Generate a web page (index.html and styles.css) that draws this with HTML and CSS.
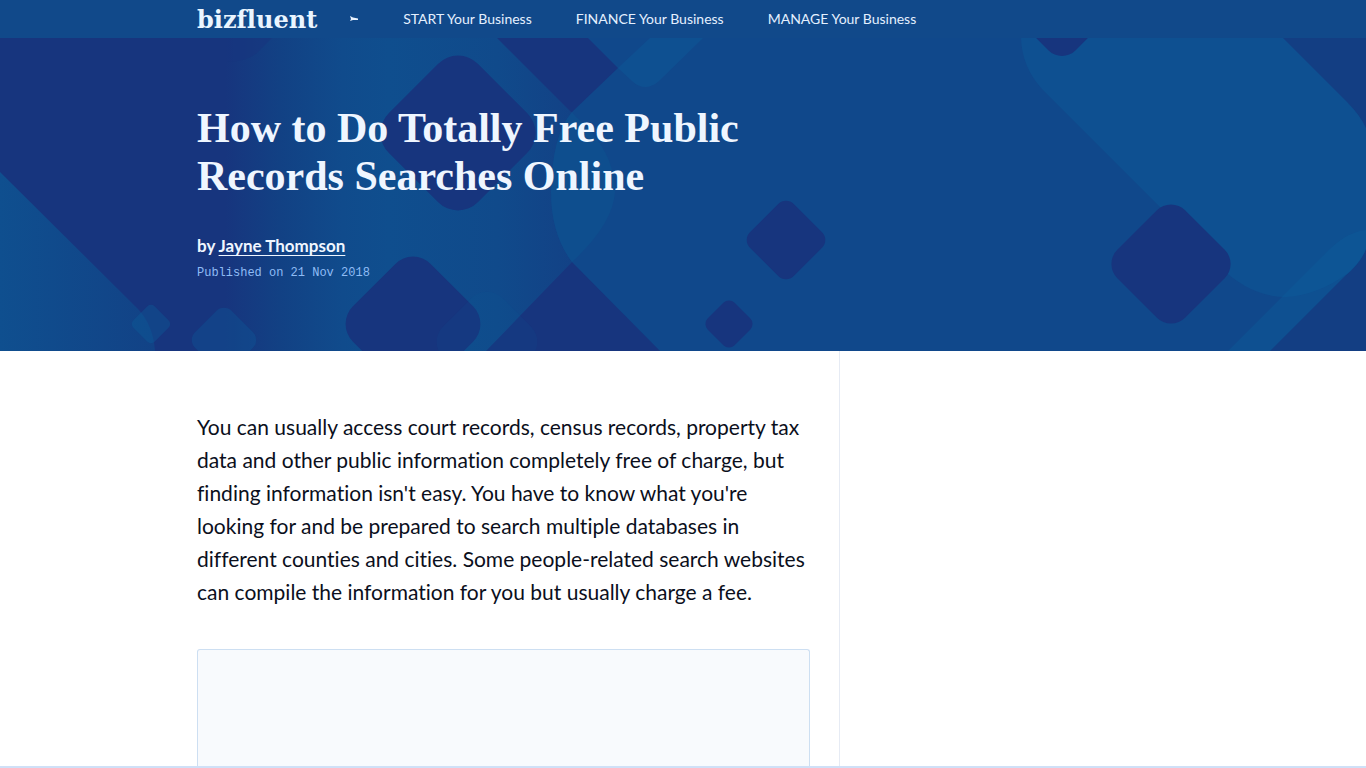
FILE: index.html
```html
<!DOCTYPE html>
<html lang="en">
<head>
    <meta charset="utf-8">
    <meta name="viewport" content="width=device-width, initial-scale=1.0">
    <title>How to Do Totally Free Public Records Searches Online</title>
    <link rel="stylesheet" href="styles.css">
</head>
<body>
    <header class="site-header">
        <div class="wrap header-row">
            <a class="logo" href="#">bizfluent</a>
            <svg class="arrow" viewBox="0 0 10 6" aria-hidden="true">
                <path d="M1 0 L4 1.500 L9 2.500 L9 4 L4 4 L1 5 L2 3 Z" fill="#eaf3ff"/>
            </svg>
            <nav class="nav">
                <a href="#">START Your Business</a>
                <a href="#">FINANCE Your Business</a>
                <a href="#">MANAGE Your Business</a>
            </nav>
        </div>
    </header>

    <section class="hero">
        <svg class="hero-bg" viewBox="0 0 1366 313" preserveAspectRatio="xMidYMid slice" aria-hidden="true">
            <defs>
                <linearGradient id="fade-left" gradientUnits="userSpaceOnUse" x1="0" y1="0" x2="155" y2="0">
                    <stop offset="0" stop-color="#0f4f8f"/>
                    <stop offset="1" stop-color="#124286"/>
                </linearGradient>
                <linearGradient id="fade-mid" gradientUnits="userSpaceOnUse" x1="225" y1="0" x2="615" y2="0">
                    <stop offset="0" stop-color="#17357e"/>
                    <stop offset=".14" stop-color="#124184"/>
                    <stop offset=".3" stop-color="#104b8c"/>
                    <stop offset=".42" stop-color="#0f4e8e"/>
                    <stop offset=".7" stop-color="#104a8b"/>
                    <stop offset="1" stop-color="#143d83"/>
                </linearGradient>
            </defs>
            <rect width="1366" height="313" fill="#17357e"/>
            <path d="M0 134 L138 271 Q153 287 155 313 H0 Z" fill="url(#fade-left)"/>
            <path d="M225 0 H497 L575 78 Q615 112 615 154 Q613 186 572 224 L486 313 H225 Z" fill="url(#fade-mid)"/>
            <path d="M225 0 H272 L257 15 Q247 24 225 24 Z" fill="#17357e" opacity=".6"/>
            <!-- large blue panel -->
            <path d="M588 0 H1366 V313 H660 L572 224 Q551 196 551 154 Q552 97 572 74 L618 30 Z" fill="#10488b"/>
            <path d="M572 74 L575 78 Q615 112 615 154 Q613 186 572 224 Q551 196 551 154 Q552 97 572 74 Z" fill="#0e4e8e"/>
            <path d="M1283 0 H1366 V90 Q1360 77 1347 64 Z" fill="#133e83"/>
            <path d="M1366 211 Q1361 225 1345 238 L1270 313 H1366 Z" fill="#133e83"/>
            <g fill="#0a65a0" opacity=".28">
                <path d="M650 0 L618 30 L632 43 Q645 55 659 43 L703 0 Z"/>
            </g>
            <path d="M1021 0 Q1022 29 1042 51 L1218 227 Q1250 259 1286 259 Q1318 257 1348 235 Q1361 223 1366 211 V90 Q1360 77 1347 64 L1283 0 Z" fill="#0a65a0" opacity=".28"/>
            <path d="M1228 313 L1323 218 Q1345 194 1366 192 V211 Q1361 225 1345 238 L1270 313 Z" fill="#0a65a0" opacity=".28"/>
            <!-- diamonds -->
            <g fill="#17357e">
                <rect x="395" y="32" width="126" height="126" rx="28" transform="rotate(45 458 95)"/>
                <rect x="358" y="231" width="110" height="110" rx="25" transform="rotate(45 413 286)"/>
                <rect x="755" y="171" width="62" height="62" rx="11" transform="rotate(45 786 202)"/>
                <rect x="710" y="267" width="38" height="38" rx="8" transform="rotate(45 729 286)"/>
                <rect x="1123" y="178" width="96" height="96" rx="20" transform="rotate(45 1171 226)"/>
                <rect x="1014" y="-90" width="96" height="96" rx="19" transform="rotate(45 1062 -42)"/>
            </g>
            <g fill="#0a65a0">
                <rect x="136" y="271" width="30" height="30" rx="5" transform="rotate(45 151 286)" opacity=".32"/>
                <rect x="198" y="276" width="52" height="52" rx="11" transform="rotate(45 224 302)" opacity=".28"/>
                <rect x="445" y="262" width="84" height="84" rx="22" transform="rotate(45 487 304)" opacity=".1"/>
            </g>
        </svg>
        <div class="wrap hero-text">
            <h1>How to Do Totally Free Public Records Searches Online</h1>
            <p class="author">by <a href="#">Jayne Thompson</a></p>
            <p class="date">Published on 21 Nov 2018</p>
        </div>
    </section>

    <main class="wrap content">
        <article class="article">
            <p>You can usually access court records, census records, property tax<br>
            data and other public information completely free of charge, but<br>
            finding information isn't easy. You have to know what you're<br>
            looking for and be prepared to search multiple databases in<br>
            different counties and cities. Some people-related search websites<br>
            can compile the information for you but usually charge a fee.</p>
            <div class="ad-box"></div>
        </article>
        <aside class="sidebar"></aside>
    </main>
    <div class="bottom-bar"></div>
</body>
</html>
```
FILE: styles.css
```css
* {
    box-sizing: border-box;
}
body {
    margin: 0;
    height: 100vh;
    overflow: hidden;
    display: flex;
    flex-direction: column;
    font-family: Lato, "Open Sans", sans-serif;
    font-variant-ligatures: none;
    color: #0b0f1c;
    background: #fff;
}
.wrap {
    width: 100%;
    max-width: 1012px;
    margin: 0 auto;
    padding: 0 20px;
}
.site-header {
    flex: none;
    background: #11498a;
}
.header-row {
    display: flex;
    align-items: center;
    height: 38px;
}
.logo {
    padding-top: 2px;
    font-family: "DejaVu Serif", serif;
    font-weight: bold;
    font-size: 24px;
    line-height: 36px;
    color: #eaf5ff;
    text-decoration: none;
}
.arrow {
    width: 10px;
    height: 6px;
    margin: 0 44px 0 32px;
}
.nav {
    display: flex;
    gap: 44px;
    padding-bottom: 2px;
    font-size: 14px;
}
.nav a {
    color: #e4f0ff;
    text-decoration: none;
    white-space: nowrap;
}
.hero {
    flex: none;
    position: relative;
    overflow: hidden;
    background: #10488b;
}
.hero-bg {
    position: absolute;
    top: 0;
    left: 0;
    width: 100%;
    height: 100%;
}
.hero-text {
    position: relative;
    padding-top: 66px;
    padding-bottom: 68px;
}
h1 {
    max-width: 612px;
    margin: 0 0 34px;
    font-family: "Liberation Serif", serif;
    font-size: 42px;
    line-height: 48px;
    color: #eff6ff;
}
.author {
    margin: 0;
    font-size: 17px;
    line-height: 24px;
    font-weight: bold;
    color: #eff6ff;
}
.author a {
    color: #eff6ff;
    text-underline-offset: 3px;
}
.date {
    margin: 5px 0 0;
    font-family: "Liberation Mono", monospace;
    font-size: 12px;
    line-height: 20px;
    color: #8fbcf5;
}
.content {
    flex: 1;
    display: flex;
    min-height: 0;
}
.article {
    flex: 0 1 643px;
    display: flex;
    flex-direction: column;
    padding: 59px 29px 0 0;
    border-right: 1px solid #e6ebf4;
}
.article p {
    margin: 0 0 41px;
    font-size: 21px;
    line-height: 33px;
}
.ad-box {
    flex: 1;
    border: 1px solid #cddff2;
    border-bottom: 0;
    border-radius: 3px 3px 0 0;
    background: #f8fafd;
}
.sidebar {
    flex: 1;
}
.bottom-bar {
    flex: none;
    height: 2px;
    background: #cfe0f7;
}
```
